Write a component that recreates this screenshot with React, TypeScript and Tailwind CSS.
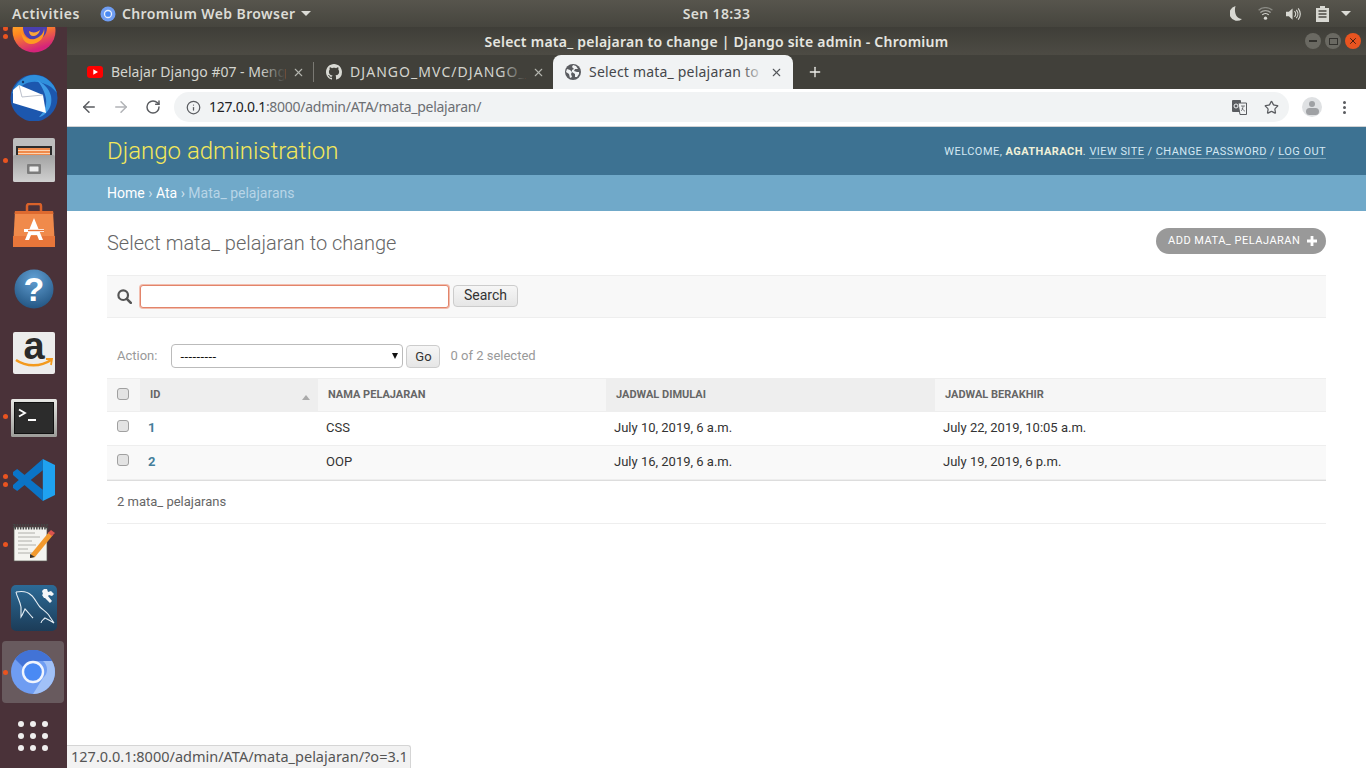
import React from "react";
import { ArrowLeft, ArrowRight, RotateCw, Info, Star, X, Plus } from "lucide-react";

const UI = { fontFamily: '"Noto Sans", "Open Sans", sans-serif' };

function Dot({ y }: { y: number }) {
  return <span className="absolute left-[3px] h-[5px] w-[5px] rounded-full bg-[#e95420]" style={{ top: y - 2.5 }} />;
}

function Slot({ children }: { children: React.ReactNode }) {
  return <div className="flex h-[64px] w-[67px] shrink-0 items-center justify-center">{children}</div>;
}

function Firefox() {
  return (
    <svg width="48" height="48" viewBox="0 0 48 48" className="mt-[-5px]">
      <defs>
        <linearGradient id="ff" x1="0" y1="0" x2="0.3" y2="1">
          <stop offset="0" stopColor="#ffd23c" />
          <stop offset="0.55" stopColor="#ff8a1f" />
          <stop offset="1" stopColor="#d5247a" />
        </linearGradient>
      </defs>
      <circle cx="24" cy="24" r="21.5" fill="url(#ff)" />
      <circle cx="25" cy="21" r="12" fill="#4a3fb0" />
      <path d="M11 24c3 8 11 10 16 7 4-2 7-5 7-10 2 9-5 16-13 16-6 0-9-5-10-13z" fill="#ff9a22" />
      <path d="M19 24c3 2 8 2 11-1-1 4-4 6-7 6-2 0-4-2-4-5z" fill="#f8a53a" />
    </svg>
  );
}

function Thunderbird() {
  return (
    <svg width="48" height="48" viewBox="0 0 48 48">
      <circle cx="24" cy="25" r="23.5" fill="#1c57ae" />
      <path d="M2 20C6 9 15 1 26 2c10 1 18 8 21 18-4-5-8-8-12-9C24 6 10 9 6 22z" fill="#2f8fdc" />
      <path d="M27 7c6 3 12 8 14 16 1 6 0 12-5 17-2 2-5 4-7 4 5-5 8-11 7-18-1-7-5-14-9-19z" fill="#3d9be6" />
      <path d="M3 17l6-5 24 10 3 18-33-10z" fill="#fff" />
      <path d="M9 12l3 12 21-2" fill="none" stroke="#b4bac6" strokeWidth="0.9" />
      <circle cx="13" cy="9" r="1.2" fill="#143a6e" />
    </svg>
  );
}

function Files() {
  return (
    <svg width="42" height="44" viewBox="0 0 42 44" className="mt-[-2px]">
      <defs>
        <linearGradient id="fl" x1="0" y1="0" x2="0" y2="1">
          <stop offset="0" stopColor="#a2a2a2" />
          <stop offset="1" stopColor="#d0d0d0" />
        </linearGradient>
      </defs>
      <path d="M2 0h38a2 2 0 0 1 2 2v40a2 2 0 0 1-2 2H2a2 2 0 0 1-2-2V2a2 2 0 0 1 2-2z" fill="#bdbdbd" />
      <rect x="3" y="8" width="36" height="9" fill="#2b2b2b" />
      <rect x="5" y="10" width="32" height="7" fill="#f08a4b" />
      <rect x="5" y="12" width="32" height="1" fill="#fbd4b4" />
      <rect x="5" y="15" width="32" height="1" fill="#fbd4b4" />
      <rect x="0" y="17" width="42" height="27" rx="2" fill="url(#fl)" />
      <rect x="14" y="26" width="14" height="10" rx="1" fill="#7c7c7c" />
      <rect x="16.5" y="28.5" width="9" height="5" rx="0.5" fill="#eee" />
    </svg>
  );
}

function Store() {
  return (
    <svg width="42" height="44" viewBox="0 0 42 44">
      <path d="M14 8V3a2 2 0 0 1 2-2h10a2 2 0 0 1 2 2v5" fill="none" stroke="#d9622a" strokeWidth="2.5" />
      <path d="M2 8h38l2 36H0z" fill="#f08a4b" />
      <rect x="0" y="33" width="42" height="11" fill="#e8763a" />
      <path d="M2 8h38l0.5 3H1.5z" fill="#dd6a30" />
      <path d="M21 15l-9 22h4l2-5h6l2 5h4l-9-22z" fill="#fff" />
      <rect x="11" y="26" width="20" height="3" fill="#fff" />
      <rect x="15" y="26.8" width="16" height="1.4" fill="#e8763a" />
    </svg>
  );
}

function Help() {
  return (
    <svg width="40" height="40" viewBox="0 0 40 40">
      <defs>
        <radialGradient id="hp" cx="0.5" cy="0.25" r="0.8">
          <stop offset="0" stopColor="#62a0d4" />
          <stop offset="1" stopColor="#20527f" />
        </radialGradient>
      </defs>
      <circle cx="20" cy="20" r="19.5" fill="url(#hp)" />
      <text x="20" y="32" textAnchor="middle" fontSize="34" fontWeight="700" fill="#fff" fontFamily="Liberation Sans">?</text>
    </svg>
  );
}

function Amazon() {
  return (
    <svg width="42" height="42" viewBox="0 0 42 42" className="mt-[-1px] overflow-visible">
      <rect width="42" height="42" rx="2" fill="#ececec" />
      <text x="21" y="27" textAnchor="middle" fontSize="38" fontWeight="700" fill="#2a2a2a" fontFamily="Liberation Sans">a</text>
      <path d="M3 28c10 7 25 7 35 0" fill="none" stroke="#f39a1e" strokeWidth="2.5" />
      <path d="M33 27l6 0-1 6" fill="none" stroke="#f39a1e" strokeWidth="1.8" />
    </svg>
  );
}

function Terminal() {
  return (
    <svg width="46" height="38" viewBox="0 0 46 38" className="mt-[2px]">
      <defs>
        <linearGradient id="tm" x1="0" y1="0" x2="0" y2="1">
          <stop offset="0" stopColor="#e8e8e5" />
          <stop offset="1" stopColor="#9c9c98" />
        </linearGradient>
      </defs>
      <rect width="46" height="38" rx="1.5" fill="url(#tm)" />
      <rect x="3.5" y="3.5" width="39" height="31" fill="#2c2c2c" stroke="#111" />
      <path d="M8 10.5l6 3.5-6 3.5" fill="none" stroke="#fff" strokeWidth="1.8" />
      <rect x="17" y="20" width="8" height="2" fill="#fff" />
    </svg>
  );
}

function VSCode() {
  return (
    <svg width="42" height="42" viewBox="0 0 100 100" className="mt-[-2px]">
      <path d="M71 0v27L10 76 0 69v-7z" fill="#0b74c6" />
      <path d="M10 24l61 49v27L0 38v-7z" fill="#0b74c6" />
      <path d="M71 0l29 14v72l-29 14z" fill="#1fa2f0" />
    </svg>
  );
}

function Notepad() {
  return (
    <svg width="44" height="38" viewBox="0 0 44 38" className="mt-[-4px]">
      <rect x="2" y="3" width="33" height="34" fill="#f4f4f0" stroke="#55554f" strokeWidth="0.7" />
      <rect x="2" y="0.8" width="33" height="3.5" fill="none" stroke="#444" strokeDasharray="1.5 1.2" strokeWidth="2.4" />
      <g stroke="#a7a7a2" strokeWidth="0.9">
        <path d="M6 9h17M6 13h22M6 17h14M6 21h18M6 25h10M6 29h15" />
      </g>
      <path d="M19 30L37 8l4 3-18 22-5 1z" fill="#f29a2e" />
      <path d="M36 9l3-3 4 3-3 3z" fill="#d9534f" />
      <path d="M18 30l5 3-5 1z" fill="#333" />
    </svg>
  );
}

function MySQL() {
  return (
    <svg width="46" height="46" viewBox="0 0 46 46" className="mt-[-3px]">
      <defs>
        <linearGradient id="my" x1="0" y1="0" x2="0" y2="1">
          <stop offset="0" stopColor="#2c6a96" />
          <stop offset="1" stopColor="#1c3c58" />
        </linearGradient>
      </defs>
      <rect width="46" height="46" rx="5" fill="url(#my)" />
      <path d="M5 7c5-1 11-1 15 3 4 3 6 9 9 12 3 3 8 6 10 10l4 6c-3-2-7-4-9-5-2 2-4 3-4 5M5 7c1 5 4 9 5 15 0 4 0 7 0 10 2-3 3-6 4-8 3 3 5 6 8 9" fill="none" stroke="#e6eef4" strokeWidth="1.1" />
      <path d="M33 4l3 0 1 3 3-1 3 3-2 2-3-1-1 1 4 5-2 2-5-5-1 0-2-3 1-1-1-3z" fill="#f4f6f8" />
    </svg>
  );
}

function Chromium() {
  return (
    <div className="ml-[-1px] mt-[-2px] flex h-[62px] w-[62px] items-center justify-center rounded-[4px] bg-[#685a5e]">
      <svg width="44" height="44" viewBox="0 0 44 44">
        <circle cx="22" cy="22" r="22" fill="#6f9df2" />
        <path d="M4 9a22 22 0 0 1 37 2H22a11 11 0 0 0-10 6z" fill="#4273d6" />
        <path d="M41 11a22 22 0 0 1-19 33l10-16a11 11 0 0 0 0-17z" fill="#a1c1f7" />
        <circle cx="22" cy="22" r="10" fill="#4a8af4" stroke="#f1f5fd" strokeWidth="2.4" />
      </svg>
    </div>
  );
}

function Dock() {
  return (
    <div className="relative flex w-[67px] shrink-0 flex-col overflow-hidden bg-[#4a3239]">
      <div className="mt-[-26px] flex flex-col">
        <Slot><Firefox /></Slot>
        <Slot><Thunderbird /></Slot>
        <Slot><Files /></Slot>
        <Slot><Store /></Slot>
        <Slot><Help /></Slot>
        <Slot><Amazon /></Slot>
        <Slot><Terminal /></Slot>
        <Slot><VSCode /></Slot>
        <Slot><Notepad /></Slot>
        <Slot><MySQL /></Slot>
        <Slot><Chromium /></Slot>
        <Slot>
          <div className="ml-[-1px] mt-[-2px] grid grid-cols-3 gap-x-[6px] gap-y-[6px]">
            {Array.from({ length: 9 }).map((_, i) => (
              <span key={i} className="h-[6px] w-[6px] rounded-full bg-[#f0eeee]" />
            ))}
          </div>
        </Slot>
      </div>
      <Dot y={1} />
      <Dot y={9} />
      <Dot y={133} />
      <Dot y={389} />
      <Dot y={449} />
      <Dot y={457} />
      <Dot y={517} />
      <Dot y={645} />
    </div>
  );
}

function TopBar() {
  return (
    <div className="grid h-[27px] shrink-0 grid-cols-[1fr_auto_1fr] items-center bg-gradient-to-b from-[#57554d] to-[#46453e] text-[14px] font-semibold tracking-[0.45px] text-[#dcdcd6]" style={UI}>
      <div className="flex items-center">
        <span className="ml-[12px] tracking-[0.55px]">Activities</span>
        <svg width="16" height="16" viewBox="0 0 16 16" className="ml-[20px]">
          <circle cx="8" cy="8" r="7.5" fill="#6f9df2" />
          <circle cx="8" cy="8" r="3.5" fill="#4a8af4" stroke="#e7eefb" strokeWidth="1.3" />
        </svg>
        <span className="ml-[6px] tracking-[0.4px]">Chromium Web Browser</span>
        <span className="ml-[5px] h-0 w-0 border-x-[5px] border-t-[5px] border-x-transparent border-t-[#dcdcd6]" />
      </div>
      <span className="pl-[67px] tracking-[0.35px]">Sen 18:33</span>
      <div className="flex items-center justify-end text-[#dcdcd6]">
        <svg width="12" height="15" viewBox="0 0 12 15" className="mr-[16px]">
          <path d="M5.5 0a7.5 7.5 0 1 0 6.5 13C7 13 3.5 7 5.5 0z" fill="#d8d8d2" />
        </svg>
        <svg width="15" height="13" viewBox="0 0 16 14" className="mr-[13px]">
          <circle cx="8" cy="12" r="1.8" fill="#d8d8d2" />
          <path d="M4.5 8.5a5 5 0 0 1 7 0" fill="none" stroke="#d8d8d2" strokeWidth="1.4" />
          <path d="M2.5 6a8 8 0 0 1 11 0" fill="none" stroke="#a8a8a2" strokeWidth="1.4" />
          <path d="M0.6 3.5a11 11 0 0 1 14.8 0" fill="none" stroke="#8a8a84" strokeWidth="1.4" />
        </svg>
        <svg width="15" height="14" viewBox="0 0 16 14" className="mr-[15px]">
          <path d="M0 4.5h3L7 1v12L3 9.5H0z" fill="#d8d8d2" />
          <path d="M9 4a4 4 0 0 1 0 6M11 2.5a7 7 0 0 1 0 9M13 1a10 10 0 0 1 0 12" fill="none" stroke="#d8d8d2" strokeWidth="1.2" />
        </svg>
        <svg width="13" height="16" viewBox="0 0 13 16" className="mr-[12px]">
          <path d="M4 0h5v2h4v14H0V2h4z" fill="#d8d8d2" />
          <path d="M2.5 5h8M2.5 8h8M2.5 11h8" stroke="#4c4a44" strokeWidth="1.3" />
        </svg>
        <span className="mr-[15px] h-0 w-0 border-x-[5px] border-t-[5px] border-x-transparent border-t-[#dcdcd6]" />
      </div>
    </div>
  );
}

function WinBtn({ bg, children }: { bg: string; children: React.ReactNode }) {
  return <span className={`flex h-[16px] w-[16px] items-center justify-center rounded-full ${bg}`}>{children}</span>;
}

function TitleBar() {
  return (
    <div className="relative flex h-[28px] shrink-0 items-center justify-center bg-gradient-to-b from-[#3f3e38] to-[#4d4b44] text-[14px] font-semibold tracking-[0.25px] text-[#e6e6e0]" style={UI}>
      <span>Select mata_ pelajaran to change | Django site admin - Chromium</span>
      <div className="absolute right-[5px] top-[6px] flex gap-[4px]">
        <WinBtn bg="bg-[#6a6962]"><span className="h-[1.5px] w-[8px] bg-[#33322e]" /></WinBtn>
        <WinBtn bg="bg-[#6a6962]"><span className="h-[7px] w-[9px] border border-[#33322e]" /></WinBtn>
        <WinBtn bg="bg-[#e95420]"><X size={10} strokeWidth={2.2} color="#3a1a10" /></WinBtn>
      </div>
    </div>
  );
}

function Tab({ w, icon, title, active, text }: { w: string; icon: React.ReactNode; title: string; active?: boolean; text: string }) {
  return (
    <div className={`relative flex h-[34px] shrink-0 items-center ${w} ${active ? "rounded-t-[8px] bg-[#f1f3f4] text-[#45474b]" : "text-[#d4d5cf]"}`}>
      <span className="ml-[12px] flex w-[16px] justify-center">{icon}</span>
      <span className={`ml-[8px] mt-[-2px] min-w-0 flex-1 whitespace-nowrap text-[14px] ${text}`}>{title}</span>
      <span className={`pointer-events-none absolute right-[28px] top-0 h-full w-[24px] bg-gradient-to-r from-transparent ${active ? "to-[#f1f3f4]" : "to-[#41403a]"}`} />
      <span className={`relative ml-[2px] flex w-[16px] justify-center ${active ? "mr-[9px]" : "mr-[7px]"}`}>
        <X size={13} strokeWidth={2} color={active ? "#55575b" : "#b4b5af"} />
      </span>
    </div>
  );
}

function TabStrip() {
  return (
    <div className="flex h-[34px] shrink-0 items-center bg-[#41403a] pl-[8px]" style={UI}>
      <Tab
        w="w-[238px]"
        text=""
        title="Belajar Django #07 - Meng"
        icon={
          <svg width="16" height="12" viewBox="0 0 16 12">
            <rect width="16" height="12" rx="3" fill="#f00" />
            <path d="M6.3 3.3v5.4L11 6z" fill="#fff" />
          </svg>
        }
      />
      <span className="h-[20px] w-px bg-[#7a7973]" />
      <Tab
        w="w-[239px]"
        text="tracking-[1.05px]"
        title="DJANGO_MVC/DJANGO_"
        icon={
          <svg width="16" height="16" viewBox="0 0 16 16" fill="#d9dad4">
            <path d="M8 0C3.58 0 0 3.58 0 8c0 3.54 2.29 6.53 5.47 7.59.4.07.55-.17.55-.38 0-.19-.01-.82-.01-1.49-2.01.37-2.53-.49-2.69-.94-.09-.23-.48-.94-.82-1.13-.28-.15-.68-.52-.01-.53.63-.01 1.08.58 1.23.82.72 1.21 1.87.87 2.33.66.07-.52.28-.87.51-1.07-1.78-.2-3.64-.89-3.64-3.95 0-.87.31-1.59.82-2.15-.08-.2-.36-1.02.08-2.12 0 0 .67-.21 2.2.82.64-.18 1.32-.27 2-.27s1.36.09 2 .27c1.53-1.04 2.2-.82 2.2-.82.44 1.1.16 1.92.08 2.12.51.56.82 1.27.82 2.15 0 3.07-1.87 3.75-3.65 3.95.29.25.54.73.54 1.48 0 1.07-.01 1.93-.01 2.2 0 .21.15.46.55.38A8.01 8.01 0 0 0 16 8c0-4.42-3.58-8-8-8z" />
          </svg>
        }
      />
      <Tab
        w="w-[240px]"
        active
        text="tracking-[0.2px]"
        title="Select mata_ pelajaran to"
        icon={
          <svg width="16" height="16" viewBox="0 0 16 16">
            <circle cx="8" cy="8" r="8" fill="#5a5c60" />
            <path d="M2 5l3 1 2 2-1 2 1 3-2 1-1-4-3-2zM8 1l3 1 2 3-3 0-1 2 3 1 2 0 0 2-2 3-2 0 0-3-3-2 0-2 2-1-2-2z" fill="#f1f3f4" />
          </svg>
        }
      />
      <Plus size={16} strokeWidth={2} color="#eeeeea" className="ml-[14px]" />
    </div>
  );
}

function Toolbar() {
  return (
    <div className="flex h-[38px] shrink-0 items-center border-b border-[#d0d2d4] bg-white pb-[1px]" style={UI}>
      <ArrowLeft size={18} strokeWidth={2} color="#5a5c60" className="ml-[13px]" />
      <ArrowRight size={18} strokeWidth={2} color="#b1b3b6" className="ml-[14px]" />
      <RotateCw size={16} strokeWidth={2.2} color="#5a5c60" className="ml-[15px]" />
      <div className="ml-[13px] flex h-[30px] w-[1115px] items-center rounded-full bg-[#f1f3f4]">
        <Info size={15} strokeWidth={2} color="#5a5c60" className="ml-[12px]" />
        <span className="ml-[8px] mt-[-1px] whitespace-nowrap text-[14px] tracking-[-0.27px] text-[#6c6f73]">
          <span className="text-[#202124]">127.0.0.1</span>:8000/admin/ATA/mata_pelajaran/
        </span>
        <svg width="15" height="15" viewBox="0 0 15 15" className="ml-auto">
          <rect x="0" y="0" width="9" height="12" rx="1" fill="#5a5c60" />
          <path d="M6 3h8.5v11.5H8z" fill="#f1f3f4" stroke="#5a5c60" />
          <path d="M9 6h4M11 6c0 3-1 4-2 5M10 8c1 2 2 3 3 3" stroke="#5a5c60" strokeWidth="0.8" fill="none" />
          <circle cx="4" cy="6" r="2" fill="none" stroke="#f1f3f4" strokeWidth="1" />
        </svg>
        <Star size={15} strokeWidth={2} color="#5a5c60" className="ml-[17px] mr-[10px]" />
      </div>
      <span className="relative ml-[13px] flex h-[20px] w-[20px] items-center justify-center overflow-hidden rounded-full bg-[#dfe1e3]">
        <span className="absolute top-[4px] h-[6px] w-[6px] rounded-full bg-[#9fa1a4]" />
        <span className="absolute top-[11px] h-[7px] w-[13px] rounded-full bg-[#9fa1a4]" />
      </span>
      <span className="ml-[21px] flex flex-col gap-[2px]">
        <span className="h-[3px] w-[3px] rounded-full bg-[#5a5c60]" />
        <span className="h-[3px] w-[3px] rounded-full bg-[#5a5c60]" />
        <span className="h-[3px] w-[3px] rounded-full bg-[#5a5c60]" />
      </span>
    </div>
  );
}

function Check() {
  return <span className="block h-[12px] w-[12px] rounded-[3px] border border-[#a0a0a0] bg-[#e3e3e3]" />;
}

const COLS = "grid grid-cols-[33px_178px_288px_329px_391px]";

function Row({ id, a, b, c, alt }: { id: string; a: string; b: string; c: string; alt?: boolean }) {
  return (
    <div className={`${COLS} h-[34px] items-center border-b border-[#eeeeee] pb-[2px] text-[13px] text-[#333] ${alt ? "bg-[#f9f9f9]" : "bg-white"}`}>
      <span className="ml-[10px] mt-[-3px]"><Check /></span>
      <span className="pl-[8px] font-bold text-[#447e9b]">{id}</span>
      <span className="pl-[8px]">{a}</span>
      <span className="pl-[8px]">{b}</span>
      <span className="pl-[8px]">{c}</span>
    </div>
  );
}

function Admin() {
  return (
    <div className="flex min-h-0 flex-1 flex-col bg-white" style={{ fontFamily: 'Roboto, "Liberation Sans", sans-serif' }}>
      <div className="flex h-[48px] shrink-0 items-center justify-between bg-[#3d7292] px-[40px]">
        <span className="text-[24px] font-light text-[#f4e85a]">Django administration</span>
        <span className="mt-[3px] text-[11px] uppercase tracking-[0.45px] text-[#d4e8f2]">
          Welcome, <strong className="font-bold text-[#f0f0d8]">agatharach</strong>.{" "}
          <span className="border-b border-[#7fa6bb]">View site</span> / <span className="border-b border-[#7fa6bb]">Change password</span> / <span className="border-b border-[#7fa6bb]">Log out</span>
        </span>
      </div>
      <div className="flex h-[36px] shrink-0 items-center bg-[#70a9c9] px-[40px] text-[14px] text-white">
        Home <span className="mx-[3.5px] text-[#cfe2ee]">›</span> Ata <span className="mx-[3.5px] text-[#cfe2ee]">›</span> <span className="text-[#b8d5e7]">Mata_ pelajarans</span>
      </div>
      <div className="px-[40px]">
        <div className="flex items-start justify-between pt-[17px]">
          <h1 className="text-[20px] font-light leading-[30px] text-[#666]">Select mata_ pelajaran to change</h1>
          <span className="flex h-[26px] w-[170px] items-center rounded-full bg-[#999] pl-[12px] text-[11px] font-normal uppercase tracking-[0.5px] text-white">
            Add mata_ pelajaran
            <svg width="10" height="10" viewBox="0 0 10 10" className="ml-[7px]">
              <path d="M3.6 0h2.8v3.6H10v2.8H6.4V10H3.6V6.4H0V3.6h3.6z" fill="#fff" />
            </svg>
          </span>
        </div>
        <div className="mt-[17px] flex h-[43px] items-center border-y border-[#eeeeee] bg-[#f8f8f8]">
          <svg width="15" height="15" viewBox="0 0 15 15" className="ml-[10px]">
            <circle cx="6.2" cy="6.2" r="4.8" fill="none" stroke="#555" strokeWidth="2.2" />
            <path d="M9.8 9.8l4 4" stroke="#555" strokeWidth="2.6" strokeLinecap="round" />
          </svg>
          <span className="ml-[8px] h-[23px] w-[309px] rounded-[3px] border border-[#e2846a] bg-white shadow-[0_0_0_1px_#f2bdae]" />
          <span className="ml-[4px] mt-[-2px] flex h-[22px] w-[65px] items-center justify-center rounded-[4px] border border-[#cccccc] bg-gradient-to-b from-[#f6f6f6] to-[#e6e6e6] text-[14px] text-[#333]">Search</span>
        </div>
        <div className="mt-[26px] flex h-[24px] items-center text-[13px] text-[#999]">
          <span className="ml-[10px]">Action:</span>
          <span className="relative ml-[14px] flex h-[24px] w-[232px] items-center rounded-[4px] border border-[#bbbbbb] bg-white pl-[8px] text-[#111]">
            <span className="text-[13px] leading-none tracking-[0.4px]">---------</span>
            <span className="absolute right-[4px] top-[8px] h-0 w-0 border-x-[3.5px] border-t-[6px] border-x-transparent border-t-[#111]" />
          </span>
          <span className="ml-[3px] mt-[1px] flex h-[23px] w-[34px] items-center justify-center rounded-[4px] border border-[#cccccc] bg-gradient-to-b from-[#f6f6f6] to-[#e6e6e6] text-[13px] text-[#333]">Go</span>
          <span className="ml-[10px]">0 of 2 selected</span>
        </div>
        <div className="mt-[10px]">
          <div className={`${COLS} h-[34px] items-center border-y border-[#eeeeee] bg-[#f6f6f6] text-[11px] font-bold uppercase text-[#666]`}>
            <span className="ml-[10px] mt-[-3px]"><Check /></span>
            <span className="relative flex h-full items-center bg-[#eeeeee] pl-[10px]">
              ID
              <span className="absolute right-[8px] top-[16px] h-0 w-0 border-x-[4px] border-b-[5px] border-x-transparent border-b-[#aaaaaa]" />
            </span>
            <span className="pl-[10px]">Nama pelajaran</span>
            <span className="flex h-full items-center bg-[#eeeeee] pl-[10px]">Jadwal dimulai</span>
            <span className="pl-[10px]">Jadwal berakhir</span>
          </div>
          <Row id="1" a="CSS" b="July 10, 2019, 6 a.m." c="July 22, 2019, 10:05 a.m." />
          <Row id="2" a="OOP" b="July 16, 2019, 6 a.m." c="July 19, 2019, 6 p.m." alt />
        </div>
        <div className="flex h-[43px] items-center border-t border-[#dddddd] pl-[10px] text-[13px] text-[#666]">2 mata_ pelajarans</div>
        <div className="h-px bg-[#eeeeee]" />
      </div>
    </div>
  );
}

export default function App() {
  return (
    <div className="relative flex h-[768px] w-[1366px] flex-col overflow-hidden bg-white">
      <TopBar />
      <div className="flex min-h-0 flex-1">
        <Dock />
        <div className="flex min-w-0 flex-1 flex-col">
          <TitleBar />
          <TabStrip />
          <Toolbar />
          <Admin />
        </div>
      </div>
      <div className="absolute bottom-0 left-[67px] flex h-[23px] w-[344px] items-center whitespace-nowrap rounded-tr-[3px] border-r border-t border-[#d5d5d5] bg-[#f2f2f2] pl-[4px] text-[14.5px] text-[#555]" style={UI}>
        127.0.0.1:8000/admin/ATA/mata_pelajaran/?o=3.1
      </div>
    </div>
  );
}
